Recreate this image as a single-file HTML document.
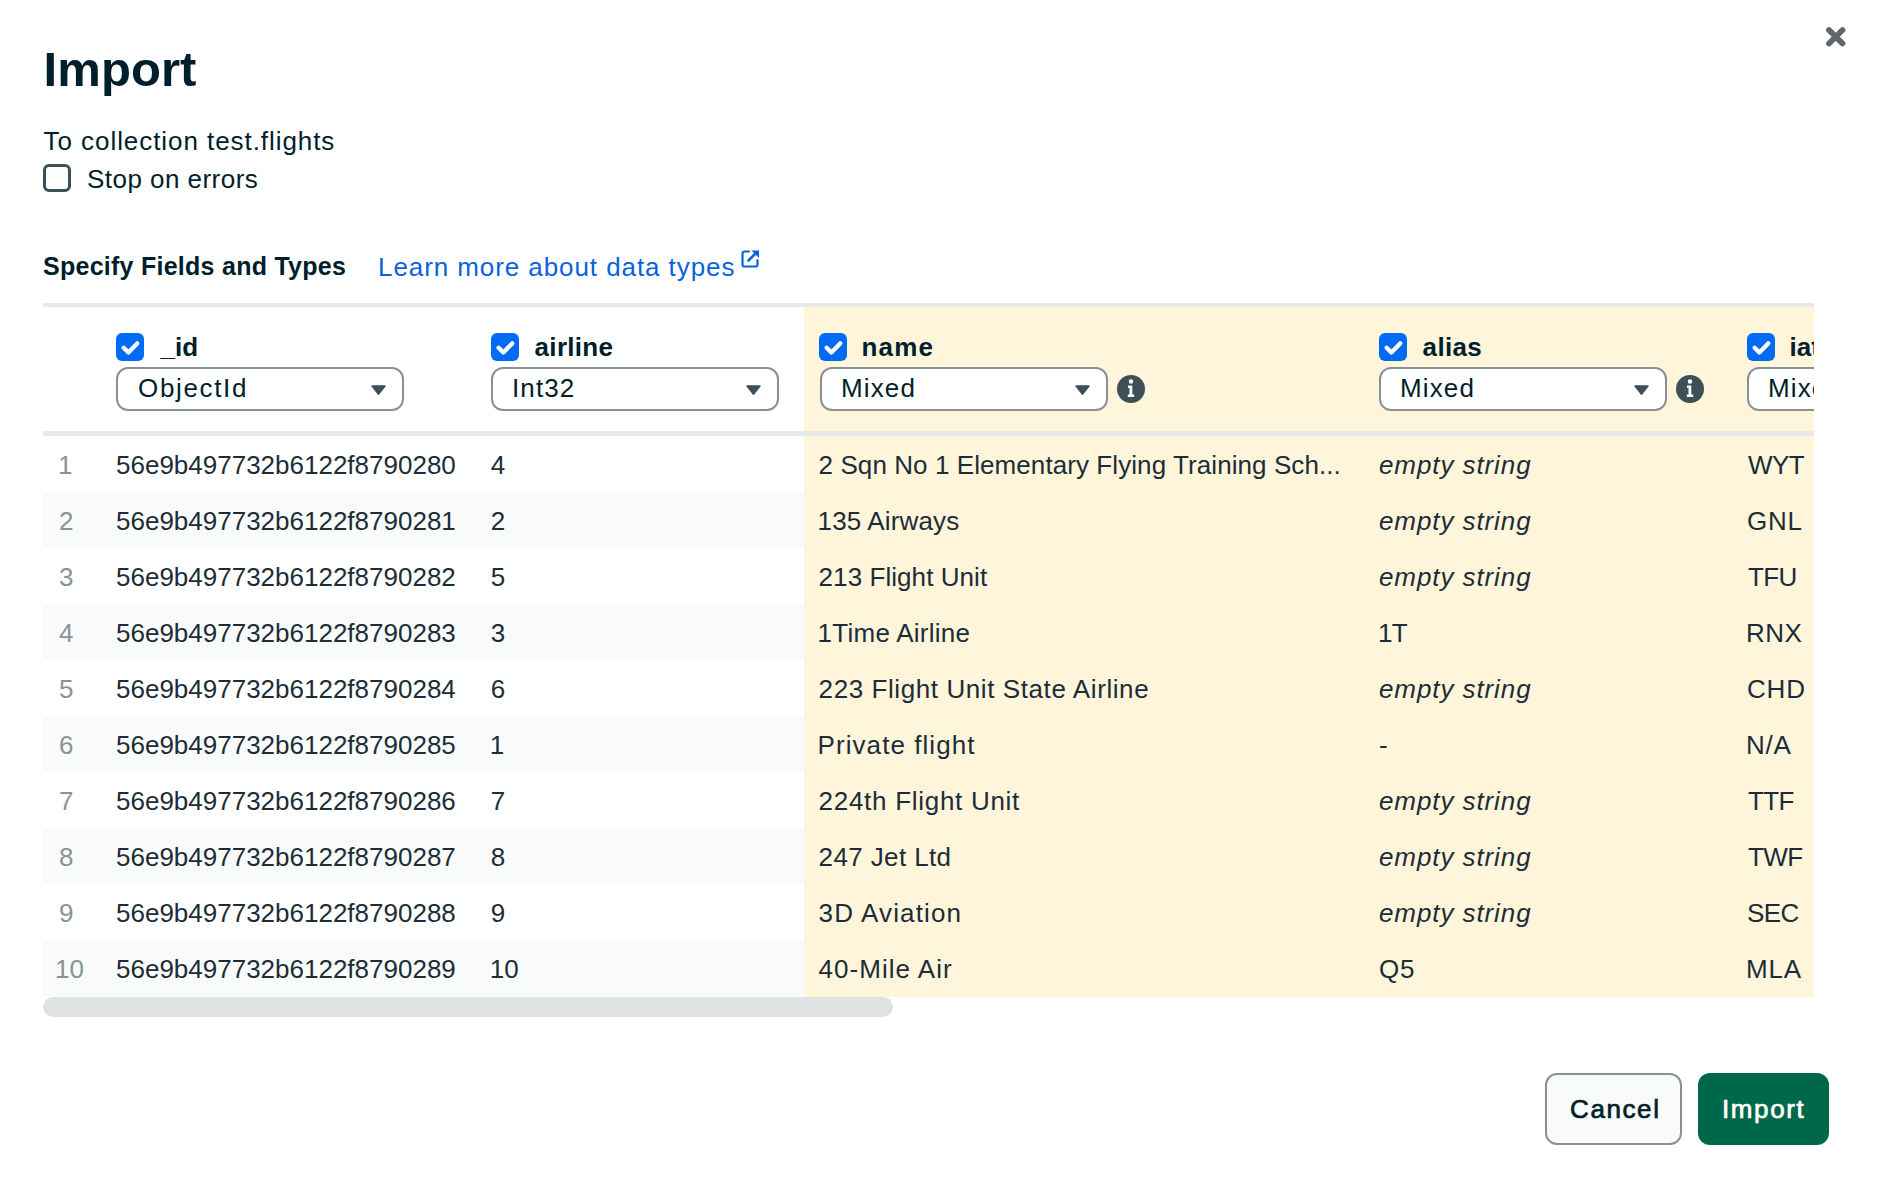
<!DOCTYPE html>
<html><head><meta charset="utf-8"><title>Import</title>
<style>
html,body{margin:0;padding:0;background:#fff;}
body{width:1882px;height:1186px;position:relative;overflow:hidden;font-family:"Liberation Sans",sans-serif;}
.t{position:absolute;white-space:nowrap;}
.r{position:absolute;}
svg{display:block;}
</style></head><body>
<div class="t" style="left:43.50px;top:45.02px;font-size:49px;line-height:49px;color:#001E2B;font-weight:bold;letter-spacing:0.100px;">Import</div>
<div class="t" style="left:43.60px;top:127.99px;font-size:26px;line-height:26px;color:#001E2B;letter-spacing:0.936px;">To collection test.flights</div>
<div class="r" style="left:43px;top:164px;width:28px;height:28px;box-sizing:border-box;border:3.6px solid #3D4F58;border-radius:6px;"></div>
<div class="t" style="left:87.00px;top:165.99px;font-size:26px;line-height:26px;color:#001E2B;letter-spacing:0.462px;">Stop on errors</div>
<div class="t" style="left:43.00px;top:253.84px;font-size:25px;line-height:25px;color:#001E2B;font-weight:bold;letter-spacing:0.261px;">Specify Fields and Types</div>
<div class="t" style="left:378.00px;top:253.99px;font-size:26px;line-height:26px;color:#0B62DC;letter-spacing:0.923px;">Learn more about data types</div>
<svg class="r" style="left:741px;top:250px" width="18" height="18" viewBox="0 0 18 18"><path d="M8 1.5H3.5a2 2 0 0 0-2 2v11a2 2 0 0 0 2 2h11a2 2 0 0 0 2-2V10" fill="none" stroke="#0B62DC" stroke-width="2.2" stroke-linecap="round"/><path d="M7.5 10.5L15 3" stroke="#0B62DC" stroke-width="2.6" stroke-linecap="round"/><path d="M10.5 0.5H18V8Z" fill="#0B62DC"/></svg>
<svg class="r" style="left:1824px;top:25px" width="23" height="23" viewBox="0 0 23 23"><path d="M5 5L18.5 18.5M18.5 5L5 18.5" stroke="#5E676E" stroke-width="5.8" stroke-linecap="round"/></svg>
<div class="r" style="left:43px;top:303px;width:1771px;height:714px;overflow:hidden;">
<div class="r" style="left:761px;top:0px;width:1100px;height:694px;background:#FEF5DB;"></div>
<div class="r" style="left:0px;top:189px;width:761px;height:56px;background:#F9FBFA;"></div>
<div class="r" style="left:0px;top:301px;width:761px;height:56px;background:#F9FBFA;"></div>
<div class="r" style="left:0px;top:413px;width:761px;height:56px;background:#F9FBFA;"></div>
<div class="r" style="left:0px;top:525px;width:761px;height:56px;background:#F9FBFA;"></div>
<div class="r" style="left:0px;top:637px;width:761px;height:56px;background:#F9FBFA;"></div>
<div class="r" style="left:0px;top:0px;width:1771px;height:4px;background:#E8EAE9;"></div>
<div class="r" style="left:0px;top:128px;width:1771px;height:5px;background:#E8EAE9;"></div>
<div class="r" style="left:73px;top:30px;width:28px;height:28px;background:#016BF8;border-radius:6px;"><svg width="28" height="28" viewBox="0 0 28 28"><path d="M7.6 14.8L12.4 19.4L21.2 10.4" fill="none" stroke="#fff" stroke-width="4.3" stroke-linecap="round" stroke-linejoin="round"/></svg></div>
<div class="t" style="left:117.60px;top:30.99px;font-size:26px;line-height:26px;color:#001E2B;font-weight:bold;">_id</div>
<div class="r" style="left:73px;top:64px;width:288px;height:44px;box-sizing:border-box;border:2px solid #8A9194;border-radius:12px;background:#fff;"></div>
<div class="t" style="left:95.00px;top:72.49px;font-size:26px;line-height:26px;color:#001E2B;letter-spacing:1.657px;">ObjectId</div>
<svg class="r" style="left:328px;top:82px" width="15" height="10" viewBox="0 0 15 10"><path d="M1 1H14L7.5 9.2Z" fill="#3D4F58" stroke="#3D4F58" stroke-width="1.4" stroke-linejoin="round"/></svg>
<div class="r" style="left:448px;top:30px;width:28px;height:28px;background:#016BF8;border-radius:6px;"><svg width="28" height="28" viewBox="0 0 28 28"><path d="M7.6 14.8L12.4 19.4L21.2 10.4" fill="none" stroke="#fff" stroke-width="4.3" stroke-linecap="round" stroke-linejoin="round"/></svg></div>
<div class="t" style="left:491.60px;top:30.99px;font-size:26px;line-height:26px;color:#001E2B;font-weight:bold;letter-spacing:0.300px;">airline</div>
<div class="r" style="left:448px;top:64px;width:288px;height:44px;box-sizing:border-box;border:2px solid #8A9194;border-radius:12px;background:#fff;"></div>
<div class="t" style="left:469.00px;top:72.49px;font-size:26px;line-height:26px;color:#001E2B;letter-spacing:1.125px;">Int32</div>
<svg class="r" style="left:703px;top:82px" width="15" height="10" viewBox="0 0 15 10"><path d="M1 1H14L7.5 9.2Z" fill="#3D4F58" stroke="#3D4F58" stroke-width="1.4" stroke-linejoin="round"/></svg>
<div class="r" style="left:776px;top:30px;width:28px;height:28px;background:#016BF8;border-radius:6px;"><svg width="28" height="28" viewBox="0 0 28 28"><path d="M7.6 14.8L12.4 19.4L21.2 10.4" fill="none" stroke="#fff" stroke-width="4.3" stroke-linecap="round" stroke-linejoin="round"/></svg></div>
<div class="t" style="left:818.60px;top:30.99px;font-size:26px;line-height:26px;color:#001E2B;font-weight:bold;letter-spacing:1.133px;">name</div>
<div class="r" style="left:777px;top:64px;width:288px;height:44px;box-sizing:border-box;border:2px solid #8A9194;border-radius:12px;background:#fff;"></div>
<div class="t" style="left:798.00px;top:72.49px;font-size:26px;line-height:26px;color:#001E2B;letter-spacing:1.125px;">Mixed</div>
<svg class="r" style="left:1032px;top:82px" width="15" height="10" viewBox="0 0 15 10"><path d="M1 1H14L7.5 9.2Z" fill="#3D4F58" stroke="#3D4F58" stroke-width="1.4" stroke-linejoin="round"/></svg>
<svg class="r" style="left:1074px;top:72px" width="28" height="28" viewBox="0 0 28 28"><circle cx="14" cy="14" r="14" fill="#3D4F58"/><circle cx="14" cy="6.5" r="2.2" fill="#fff"/><path d="M11 10.5H15.3V19.5H17.2V22H10.8V19.5H12.5V13H11Z" fill="#fff"/></svg>
<div class="r" style="left:1336px;top:30px;width:28px;height:28px;background:#016BF8;border-radius:6px;"><svg width="28" height="28" viewBox="0 0 28 28"><path d="M7.6 14.8L12.4 19.4L21.2 10.4" fill="none" stroke="#fff" stroke-width="4.3" stroke-linecap="round" stroke-linejoin="round"/></svg></div>
<div class="t" style="left:1379.60px;top:30.99px;font-size:26px;line-height:26px;color:#001E2B;font-weight:bold;letter-spacing:0.350px;">alias</div>
<div class="r" style="left:1336px;top:64px;width:288px;height:44px;box-sizing:border-box;border:2px solid #8A9194;border-radius:12px;background:#fff;"></div>
<div class="t" style="left:1357.00px;top:72.49px;font-size:26px;line-height:26px;color:#001E2B;letter-spacing:1.125px;">Mixed</div>
<svg class="r" style="left:1591px;top:82px" width="15" height="10" viewBox="0 0 15 10"><path d="M1 1H14L7.5 9.2Z" fill="#3D4F58" stroke="#3D4F58" stroke-width="1.4" stroke-linejoin="round"/></svg>
<svg class="r" style="left:1633px;top:72px" width="28" height="28" viewBox="0 0 28 28"><circle cx="14" cy="14" r="14" fill="#3D4F58"/><circle cx="14" cy="6.5" r="2.2" fill="#fff"/><path d="M11 10.5H15.3V19.5H17.2V22H10.8V19.5H12.5V13H11Z" fill="#fff"/></svg>
<div class="r" style="left:1704px;top:30px;width:28px;height:28px;background:#016BF8;border-radius:6px;"><svg width="28" height="28" viewBox="0 0 28 28"><path d="M7.6 14.8L12.4 19.4L21.2 10.4" fill="none" stroke="#fff" stroke-width="4.3" stroke-linecap="round" stroke-linejoin="round"/></svg></div>
<div class="t" style="left:1746.60px;top:30.99px;font-size:26px;line-height:26px;color:#001E2B;font-weight:bold;">iata</div>
<div class="r" style="left:1704px;top:64px;width:288px;height:44px;box-sizing:border-box;border:2px solid #8A9194;border-radius:12px;background:#fff;"></div>
<div class="t" style="left:1725.00px;top:72.49px;font-size:26px;line-height:26px;color:#001E2B;letter-spacing:1.125px;">Mixed</div>
<svg class="r" style="left:1959px;top:82px" width="15" height="10" viewBox="0 0 15 10"><path d="M1 1H14L7.5 9.2Z" fill="#3D4F58" stroke="#3D4F58" stroke-width="1.4" stroke-linejoin="round"/></svg>
<div class="t" style="left:15.00px;top:148.99px;font-size:26px;line-height:26px;color:#889397;">1</div>
<div class="t" style="left:73.00px;top:148.99px;font-size:26px;line-height:26px;color:#1C2D38;">56e9b497732b6122f8790280</div>
<div class="t" style="left:447.80px;top:148.99px;font-size:26px;line-height:26px;color:#1C2D38;">4</div>
<div class="t" style="left:775.60px;top:148.99px;font-size:26px;line-height:26px;color:#1C2D38;letter-spacing:0.079px;">2 Sqn No 1 Elementary Flying Training Sch...</div>
<div class="t" style="left:1336.00px;top:148.99px;font-size:26px;line-height:26px;color:#1C2D38;font-style:italic;letter-spacing:0.909px;">empty string</div>
<div class="t" style="left:1705.00px;top:148.99px;font-size:26px;line-height:26px;color:#1C2D38;letter-spacing:-0.600px;">WYT</div>
<div class="t" style="left:16.00px;top:204.99px;font-size:26px;line-height:26px;color:#889397;">2</div>
<div class="t" style="left:73.00px;top:204.99px;font-size:26px;line-height:26px;color:#1C2D38;">56e9b497732b6122f8790281</div>
<div class="t" style="left:447.80px;top:204.99px;font-size:26px;line-height:26px;color:#1C2D38;">2</div>
<div class="t" style="left:774.60px;top:204.99px;font-size:26px;line-height:26px;color:#1C2D38;letter-spacing:0.140px;">135 Airways</div>
<div class="t" style="left:1336.00px;top:204.99px;font-size:26px;line-height:26px;color:#1C2D38;font-style:italic;letter-spacing:0.909px;">empty string</div>
<div class="t" style="left:1704.00px;top:204.99px;font-size:26px;line-height:26px;color:#1C2D38;letter-spacing:0.800px;">GNL</div>
<div class="t" style="left:16.00px;top:260.99px;font-size:26px;line-height:26px;color:#889397;">3</div>
<div class="t" style="left:73.00px;top:260.99px;font-size:26px;line-height:26px;color:#1C2D38;">56e9b497732b6122f8790282</div>
<div class="t" style="left:447.80px;top:260.99px;font-size:26px;line-height:26px;color:#1C2D38;">5</div>
<div class="t" style="left:775.60px;top:260.99px;font-size:26px;line-height:26px;color:#1C2D38;letter-spacing:0.064px;">213 Flight Unit</div>
<div class="t" style="left:1336.00px;top:260.99px;font-size:26px;line-height:26px;color:#1C2D38;font-style:italic;letter-spacing:0.909px;">empty string</div>
<div class="t" style="left:1705.00px;top:260.99px;font-size:26px;line-height:26px;color:#1C2D38;letter-spacing:-0.600px;">TFU</div>
<div class="t" style="left:16.00px;top:316.99px;font-size:26px;line-height:26px;color:#889397;">4</div>
<div class="t" style="left:73.00px;top:316.99px;font-size:26px;line-height:26px;color:#1C2D38;">56e9b497732b6122f8790283</div>
<div class="t" style="left:447.80px;top:316.99px;font-size:26px;line-height:26px;color:#1C2D38;">3</div>
<div class="t" style="left:774.60px;top:316.99px;font-size:26px;line-height:26px;color:#1C2D38;letter-spacing:0.250px;">1Time Airline</div>
<div class="t" style="left:1335.00px;top:316.99px;font-size:26px;line-height:26px;color:#1C2D38;letter-spacing:-0.600px;">1T</div>
<div class="t" style="left:1703.00px;top:316.99px;font-size:26px;line-height:26px;color:#1C2D38;letter-spacing:0.500px;">RNX</div>
<div class="t" style="left:16.00px;top:372.99px;font-size:26px;line-height:26px;color:#889397;">5</div>
<div class="t" style="left:73.00px;top:372.99px;font-size:26px;line-height:26px;color:#1C2D38;">56e9b497732b6122f8790284</div>
<div class="t" style="left:447.80px;top:372.99px;font-size:26px;line-height:26px;color:#1C2D38;">6</div>
<div class="t" style="left:775.60px;top:372.99px;font-size:26px;line-height:26px;color:#1C2D38;letter-spacing:0.586px;">223 Flight Unit State Airline</div>
<div class="t" style="left:1336.00px;top:372.99px;font-size:26px;line-height:26px;color:#1C2D38;font-style:italic;letter-spacing:0.909px;">empty string</div>
<div class="t" style="left:1704.00px;top:372.99px;font-size:26px;line-height:26px;color:#1C2D38;letter-spacing:0.800px;">CHD</div>
<div class="t" style="left:16.00px;top:428.99px;font-size:26px;line-height:26px;color:#889397;">6</div>
<div class="t" style="left:73.00px;top:428.99px;font-size:26px;line-height:26px;color:#1C2D38;">56e9b497732b6122f8790285</div>
<div class="t" style="left:446.80px;top:428.99px;font-size:26px;line-height:26px;color:#1C2D38;">1</div>
<div class="t" style="left:774.60px;top:428.99px;font-size:26px;line-height:26px;color:#1C2D38;letter-spacing:1.062px;">Private flight</div>
<div class="t" style="left:1336.00px;top:428.99px;font-size:26px;line-height:26px;color:#1C2D38;">-</div>
<div class="t" style="left:1703.00px;top:428.99px;font-size:26px;line-height:26px;color:#1C2D38;letter-spacing:0.800px;">N/A</div>
<div class="t" style="left:16.00px;top:484.99px;font-size:26px;line-height:26px;color:#889397;">7</div>
<div class="t" style="left:73.00px;top:484.99px;font-size:26px;line-height:26px;color:#1C2D38;">56e9b497732b6122f8790286</div>
<div class="t" style="left:447.80px;top:484.99px;font-size:26px;line-height:26px;color:#1C2D38;">7</div>
<div class="t" style="left:775.60px;top:484.99px;font-size:26px;line-height:26px;color:#1C2D38;letter-spacing:0.712px;">224th Flight Unit</div>
<div class="t" style="left:1336.00px;top:484.99px;font-size:26px;line-height:26px;color:#1C2D38;font-style:italic;letter-spacing:0.909px;">empty string</div>
<div class="t" style="left:1705.00px;top:484.99px;font-size:26px;line-height:26px;color:#1C2D38;letter-spacing:-0.600px;">TTF</div>
<div class="t" style="left:16.00px;top:540.99px;font-size:26px;line-height:26px;color:#889397;">8</div>
<div class="t" style="left:73.00px;top:540.99px;font-size:26px;line-height:26px;color:#1C2D38;">56e9b497732b6122f8790287</div>
<div class="t" style="left:447.80px;top:540.99px;font-size:26px;line-height:26px;color:#1C2D38;">8</div>
<div class="t" style="left:775.60px;top:540.99px;font-size:26px;line-height:26px;color:#1C2D38;letter-spacing:0.380px;">247 Jet Ltd</div>
<div class="t" style="left:1336.00px;top:540.99px;font-size:26px;line-height:26px;color:#1C2D38;font-style:italic;letter-spacing:0.909px;">empty string</div>
<div class="t" style="left:1705.00px;top:540.99px;font-size:26px;line-height:26px;color:#1C2D38;letter-spacing:-0.600px;">TWF</div>
<div class="t" style="left:16.00px;top:596.99px;font-size:26px;line-height:26px;color:#889397;">9</div>
<div class="t" style="left:73.00px;top:596.99px;font-size:26px;line-height:26px;color:#1C2D38;">56e9b497732b6122f8790288</div>
<div class="t" style="left:447.80px;top:596.99px;font-size:26px;line-height:26px;color:#1C2D38;">9</div>
<div class="t" style="left:775.60px;top:596.99px;font-size:26px;line-height:26px;color:#1C2D38;letter-spacing:1.140px;">3D Aviation</div>
<div class="t" style="left:1336.00px;top:596.99px;font-size:26px;line-height:26px;color:#1C2D38;font-style:italic;letter-spacing:0.909px;">empty string</div>
<div class="t" style="left:1704.00px;top:596.99px;font-size:26px;line-height:26px;color:#1C2D38;letter-spacing:-0.600px;">SEC</div>
<div class="t" style="left:12.00px;top:652.99px;font-size:26px;line-height:26px;color:#889397;">10</div>
<div class="t" style="left:73.00px;top:652.99px;font-size:26px;line-height:26px;color:#1C2D38;">56e9b497732b6122f8790289</div>
<div class="t" style="left:446.80px;top:652.99px;font-size:26px;line-height:26px;color:#1C2D38;">10</div>
<div class="t" style="left:775.60px;top:652.99px;font-size:26px;line-height:26px;color:#1C2D38;letter-spacing:1.020px;">40-Mile Air</div>
<div class="t" style="left:1336.00px;top:652.99px;font-size:26px;line-height:26px;color:#1C2D38;letter-spacing:0.800px;">Q5</div>
<div class="t" style="left:1703.00px;top:652.99px;font-size:26px;line-height:26px;color:#1C2D38;letter-spacing:0.800px;">MLA</div>
<div class="r" style="left:0px;top:694px;width:850px;height:20px;background:#DFE2E3;border-radius:10px;"></div>
</div>
<div class="r" style="left:1545px;top:1073px;width:137px;height:72px;box-sizing:border-box;border:2px solid #8A9194;border-radius:12px;background:#F9FBFA;"></div>
<div class="t" style="left:1570.00px;top:1096.49px;font-size:26px;line-height:26px;color:#001E2B;letter-spacing:1.600px;-webkit-text-stroke:0.7px #001E2B;">Cancel</div>
<div class="r" style="left:1698px;top:1073px;width:131px;height:72px;background:#00684A;border-radius:12px;"></div>
<div class="t" style="left:1722.00px;top:1096.49px;font-size:26px;line-height:26px;color:#FFFFFF;letter-spacing:1.600px;-webkit-text-stroke:0.7px #fff;">Import</div>
</body></html>
